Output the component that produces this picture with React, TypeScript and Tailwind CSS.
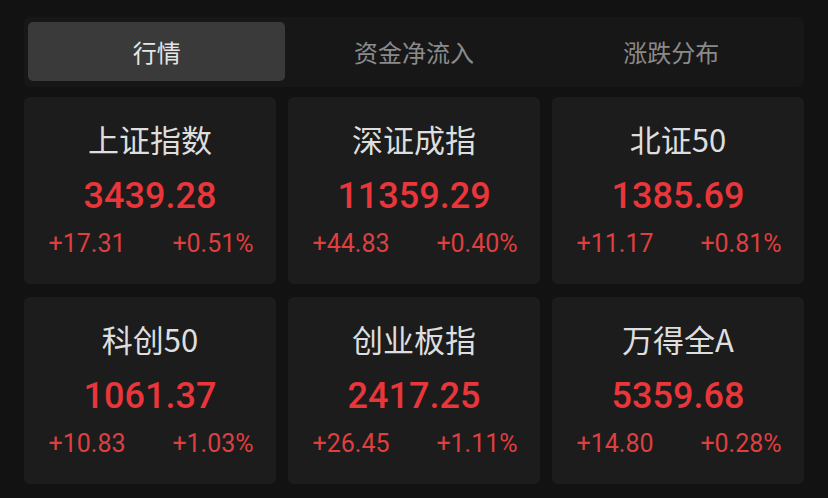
import React from "react";

type Item = { name: string; value: string; change: string; pct: string };

const items: Item[] = [
  { name: "上证指数", value: "3439.28", change: "+17.31", pct: "+0.51%" },
  { name: "深证成指", value: "11359.29", change: "+44.83", pct: "+0.40%" },
  { name: "北证50", value: "1385.69", change: "+11.17", pct: "+0.81%" },
  { name: "科创50", value: "1061.37", change: "+10.83", pct: "+1.03%" },
  { name: "创业板指", value: "2417.25", change: "+26.45", pct: "+1.11%" },
  { name: "万得全A", value: "5359.68", change: "+14.80", pct: "+0.28%" },
];

const tabs = ["行情", "资金净流入", "涨跌分布"];

export default function App() {
  return (
    <div
      className="w-[828px] h-[498px] bg-[#121212] px-[24px] pt-[17px] overflow-hidden"
      style={{ fontFamily: 'Roboto, "Noto Sans CJK SC", sans-serif' }}
    >
      <div className="h-[70px] rounded-[6px] bg-[#171717] p-[5px_4px_6px_4px] grid grid-cols-3">
        {tabs.map((t, i) => (
          <div
            key={t}
            className={
              i === 0
                ? "rounded-[5px] bg-[#3a3a3a] flex items-center justify-center text-[24px] text-[#e6e6e6] leading-none"
                : "flex items-center justify-center text-[24px] text-[#8a8a8a] leading-none"
            }
            style={{ fontFamily: '"Noto Sans CJK SC", sans-serif' }}
          >
            {t}
          </div>
        ))}
      </div>
      <div className="mt-[10px] grid grid-cols-3 gap-x-[12px] gap-y-[13px]">
        {items.map((it) => (
          <div
            key={it.name}
            className="h-[187px] rounded-[6px] bg-[#1c1c1c] flex flex-col items-center pt-[26px]"
          >
            <div
              className="text-[31px] leading-[31px] text-[#dedede]"
              style={{ fontFamily: '"Noto Sans CJK SC", sans-serif' }}
            >
              {it.name}
            </div>
            <div className="mt-[24px] text-[36px] leading-[36px] font-medium text-[#e8363b]">
              {it.value}
            </div>
            <div className="mt-[17px] w-full grid grid-cols-2 text-[25px] leading-[25px] text-[#de3f3f]">
              <div className="text-center">{it.change}</div>
              <div className="text-center">{it.pct}</div>
            </div>
          </div>
        ))}
      </div>
    </div>
  );
}
